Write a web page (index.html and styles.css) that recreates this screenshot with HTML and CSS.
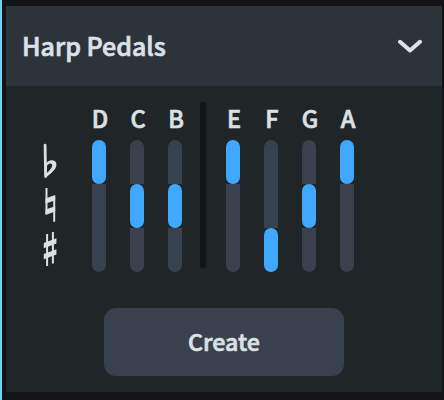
FILE: index.html
```
<!DOCTYPE html>
<html lang="en">
<head>
<meta charset="UTF-8">
<meta name="viewport" content="width=device-width, initial-scale=1.0">
<title>Harp Pedals</title>
<link rel="stylesheet" href="styles.css">
</head>
<body>

<div class="panel">
    <div class="header">
        <span class="title">Harp Pedals</span>
        <svg class="chevron" width="24" height="14" viewBox="0 0 24 14">
            <path d="M2 2.8 L12 11.4 L22 2.8"/>
        </svg>
    </div>

    <div class="content">
        <div class="pedals">
            <div class="signs">
                <!-- flat -->
                <svg width="16" height="44" viewBox="0 0 16 44">
                    <path class="stem" d="M3.1 5.2 L3.6 36.4"/>
                    <path class="fill" fill-rule="evenodd" d="M3.5 24 C6 20.8 8.2 20 10.4 20.3 C13 20.7 14.8 22.5 14.4 25.2 C14 29.5 9 33.5 3 38.2 Z M4.9 33 C8 30.2 9.9 28 10.2 25.6 C10.3 23.9 9.2 23.2 7.8 23.6 C6.2 24.2 4.9 25.4 4.8 27 Z"/>
                </svg>
                <!-- natural -->
                <svg width="16" height="44" viewBox="0 0 16 44">
                    <path class="line" d="M4.5 4 V30 M12.2 12.5 V37.8"/>
                    <path class="fill" d="M3.5 14.4 L13.2 11 V16.3 L3.5 19.7 Z M3.5 25.6 L13.2 22.2 V27.5 L3.5 30.9 Z"/>
                </svg>
                <!-- sharp -->
                <svg width="16" height="44" viewBox="0 0 16 44">
                    <path class="line" d="M5.1 6 V38 M10.9 4 V35.6"/>
                    <path class="fill" d="M1.8 15 L14.4 10.2 V15.4 L1.8 20.2 Z M1.8 26 L14.4 21.2 V26.4 L1.8 31.2 Z"/>
                </svg>
            </div>

            <div class="group">
                <div class="pedal"><span class="note">D</span><i class="on"></i><i></i><i></i></div>
                <div class="pedal"><span class="note">C</span><i></i><i class="on"></i><i></i></div>
                <div class="pedal"><span class="note">B</span><i></i><i class="on"></i><i></i></div>
            </div>
            <div class="divider"></div>
            <div class="group">
                <div class="pedal"><span class="note">E</span><i class="on"></i><i></i><i></i></div>
                <div class="pedal"><span class="note">F</span><i></i><i></i><i class="on"></i></div>
                <div class="pedal"><span class="note">G</span><i></i><i class="on"></i><i></i></div>
                <div class="pedal"><span class="note">A</span><i class="on"></i><i></i><i></i></div>
            </div>
        </div>

        <button class="create">Create</button>
    </div>
</div>

</body>
</html>
```
FILE: styles.css
```
* {
    box-sizing: border-box;
}

body {
    margin: 0;
    height: 400px;
    padding: 6px 2px 8px 4px;
    border-left: 2px solid #74d0f5;
    background-color: #131416;
    color: #dce0e8;
    font-family: "Noto Sans CJK SC", sans-serif;
    font-weight: 500;
    -webkit-text-stroke: 0.7px;
    overflow: hidden;
}

.panel {
    height: 386px;
    background-color: #202528;
}

/* Title bar */
.header {
    display: flex;
    align-items: center;
    justify-content: space-between;
    height: 80px;
    padding: 0 20px 0 16px;
    background-color: #2d333b;
}

.title {
    padding-bottom: 3px;
    font-size: 25px;
    line-height: 38px;
}

.chevron {
    fill: none;
    stroke: #dce0e8;
    stroke-width: 4;
    stroke-linecap: round;
    stroke-linejoin: round;
}

.content {
    display: flex;
    flex-direction: column;
    align-items: center;
    padding-top: 16px;
}

/* Pedal diagram */
.pedals {
    display: flex;
    align-self: stretch;
    height: 170px;
    padding-left: 36px;
}

.signs {
    display: flex;
    flex-direction: column;
    margin: 38px 34px 0 0;
}

.fill {
    fill: #dce0e3;
}

.stem,
.line {
    fill: none;
    stroke: #dce0e3;
    stroke-width: 2.8;
    stroke-linecap: round;
}

.line {
    stroke-width: 2;
    stroke-linecap: butt;
}

.group {
    display: flex;
    gap: 24px;
}

.pedal {
    display: flex;
    flex-direction: column;
    align-items: center;
    width: 14px;
}

.note {
    height: 38px;
    padding-left: 2px;
    color: #dce0e3;
    font-size: 23.5px;
    line-height: 32px;
}

.pedal i {
    width: 14px;
    height: 44px;
    background-color: #38414d;
}

.pedal i:nth-child(2) {
    border-radius: 7px 7px 0 0;
}

.pedal i:last-child {
    border-radius: 0 0 7px 7px;
}

.pedal i.on {
    border-radius: 7px;
    background-color: #40a9ff;
}

.divider {
    width: 6px;
    height: 166px;
    margin: 0 20px 0 18px;
    border-radius: 2px;
    background-color: #131416;
}

.create {
    width: 240px;
    height: 68px;
    margin-top: 36px;
    padding: 0 0 2px;
    border: none;
    border-radius: 12px;
    background-color: #38414d;
    color: #dce0e3;
    font: inherit;
    font-size: 23.2px;
    -webkit-text-stroke: 0.7px;
    cursor: pointer;
}
```
